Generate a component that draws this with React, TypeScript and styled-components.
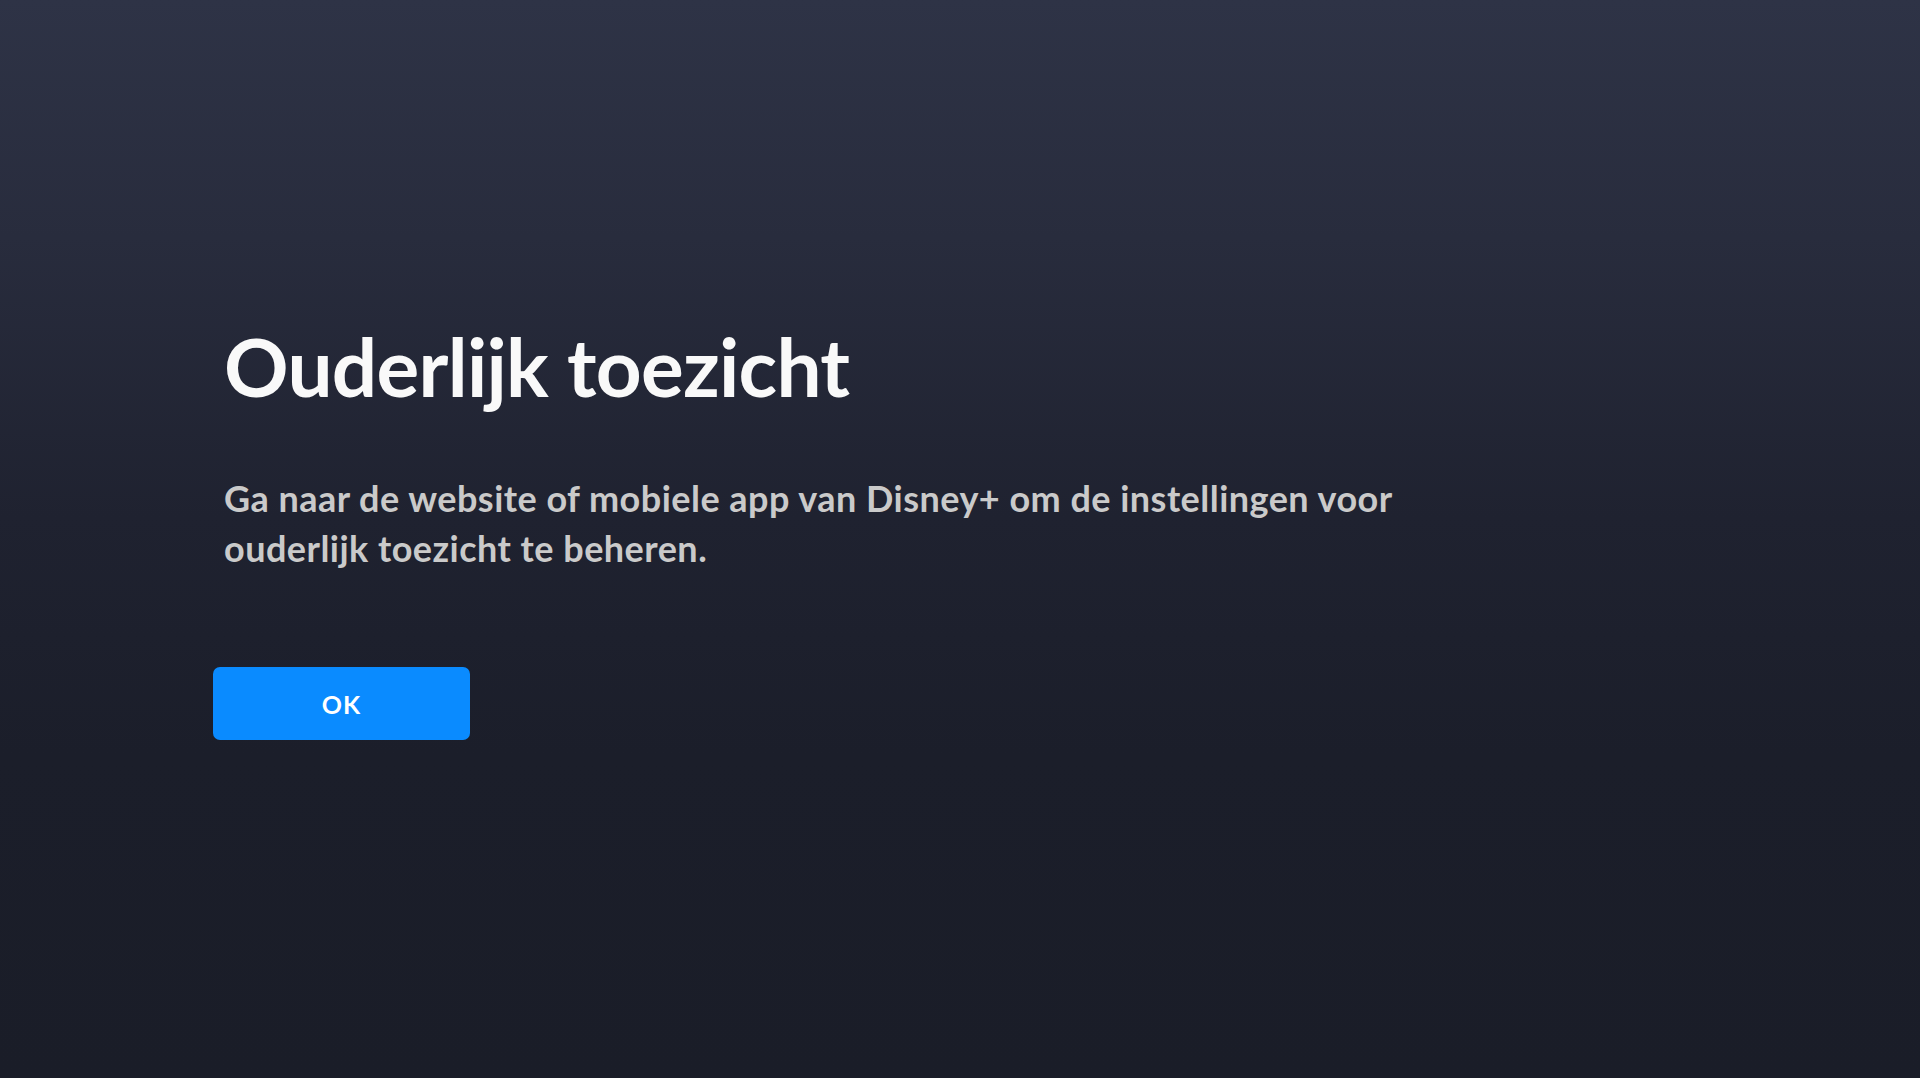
import React from "react";
import styled, { createGlobalStyle } from "styled-components";

const GlobalStyle = createGlobalStyle`
  html, body {
    margin: 0;
    padding: 0;
    height: 100%;
  }
  body {
    font-family: Lato, "Noto Sans", "Liberation Sans", sans-serif;
    background: #1a1d29;
  }
  #root {
    min-height: 100%;
  }
`;

const Screen = styled.main`
  width: 100%;
  height: 1078px;
  box-sizing: border-box;
  background: linear-gradient(
    180deg,
    #2e3346 0%,
    #282c3d 22%,
    #1f2230 48%,
    #1b1e2a 70%,
    #1a1d28 100%
  );
  display: flex;
  flex-direction: column;
  padding: 318px 0 0 224px;
`;

const Title = styled.h1`
  margin: 0;
  font-family: Lato, "Noto Sans", sans-serif;
  font-weight: 700;
  font-size: 80px;
  line-height: 96px;
  color: #f9f9f9;
  letter-spacing: -0.7px;
`;

const Message = styled.p`
  margin: 59px 0 0;
  max-width: 1200px;
  font-family: Lato, "Noto Sans", sans-serif;
  font-weight: 700;
  font-size: 36px;
  line-height: 50px;
  color: #cacaca;
  letter-spacing: 0.47px;
`;

const Actions = styled.div`
  display: flex;
  margin: 94px 0 0 -11px;
`;

const PrimaryButton = styled.button`
  width: 257px;
  height: 73px;
  border: none;
  border-radius: 7px;
  background: #0a8bff;
  color: #ffffff;
  font-family: Lato, "Noto Sans", sans-serif;
  font-weight: 700;
  font-size: 25px;
  letter-spacing: 1.2px;
  cursor: pointer;
  display: flex;
  align-items: center;
  justify-content: center;
  padding: 0;
`;

export default function App() {
  return (
    <>
      <GlobalStyle />
      <Screen>
        <Title>Ouderlijk toezicht</Title>
        <Message>
          Ga naar de website of mobiele app van Disney+ om de instellingen voor
          ouderlijk toezicht te beheren.
        </Message>
        <Actions>
          <PrimaryButton>OK</PrimaryButton>
        </Actions>
      </Screen>
    </>
  );
}
